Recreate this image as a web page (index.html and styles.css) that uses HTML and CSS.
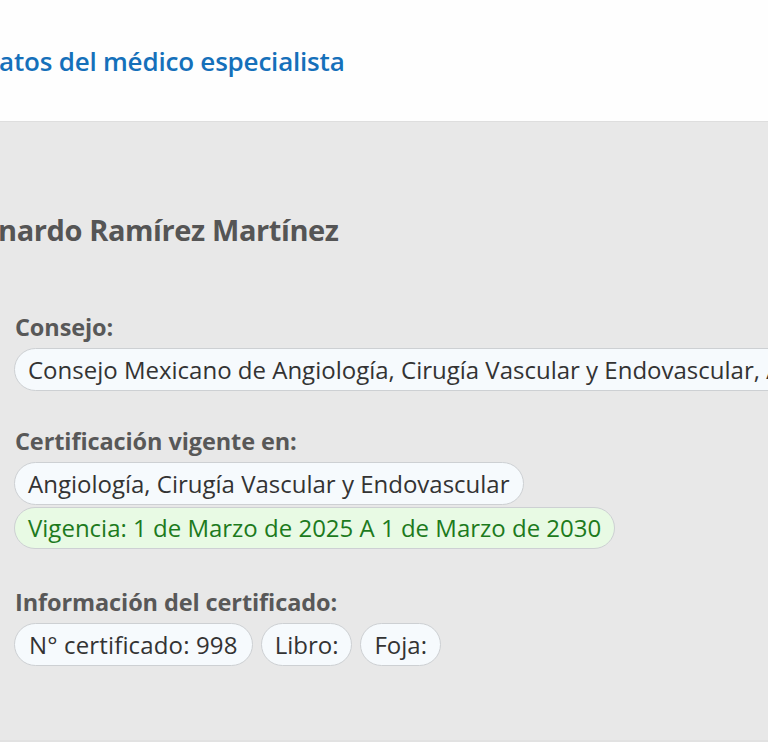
FILE: index.html
```html
<!DOCTYPE html>
<html lang="es">
<head>
<meta charset="utf-8">
<title>Datos del médico especialista</title>
<link rel="stylesheet" href="styles.css">
</head>
<body>
<header class="top">
  <h1 class="title">atos del médico especialista</h1>
</header>
<main class="panel">
  <h2 class="name">nardo Ramírez Martínez</h2>
  <section class="group">
    <h3 class="label">Consejo:</h3>
    <div class="pills">
      <span class="pill pill-wide">Consejo Mexicano de Angiología, Cirugía Vascular y Endovascular, A.C.</span>
    </div>
  </section>
  <section class="group">
    <h3 class="label">Certificación vigente en:</h3>
    <div class="pills pills-col">
      <span class="pill">Angiología, Cirugía Vascular y Endovascular</span>
      <span class="pill pill-green">Vigencia: 1 de Marzo de 2025 A 1 de Marzo de 2030</span>
    </div>
  </section>
  <section class="group">
    <h3 class="label">Información del certificado:</h3>
    <div class="pills">
      <span class="pill pill-num">N° certificado: 998</span>
      <span class="pill">Libro:</span>
      <span class="pill">Foja:</span>
    </div>
  </section>
</main>
<footer class="bottom"></footer>
</body>
</html>
```
FILE: styles.css
```css
html, body {
  margin: 0;
  padding: 0;
  background: #ffffff;
  font-family: "Open Sans", "Noto Sans", sans-serif;
  overflow: hidden;
}
.top {
  height: 121px;
  background: #fefefe;
  border-bottom: 1px solid #dedede;
  display: flex;
  align-items: center;
}
.title {
  margin: 0 0 0 -1px;
  font-size: 26px;
  font-weight: 600;
  color: #1570ba;
  letter-spacing: -0.2px;
  white-space: nowrap;
}
.panel {
  background: #e8e8e8;
  padding: 88px 0 74px 14px;
  border-bottom: 2px solid #e1e1e1;
  overflow: hidden;
}
.name {
  margin: 0 0 0 -16px;
  font-size: 29px;
  font-weight: 700;
  color: #555555;
  letter-spacing: -0.4px;
  white-space: nowrap;
  line-height: 40px;
}
.group {
  margin-top: 62px;
}
.group + .group {
  margin-top: 35px;
}
.group:last-child {
  margin-top: 38px;
}
.label {
  margin: 0 0 6px 1px;
  font-size: 23.5px;
  font-weight: 700;
  color: #585858;
  line-height: 30px;
  letter-spacing: -0.1px;
}
.pills {
  display: flex;
  gap: 8px;
  flex-wrap: nowrap;
}
.pills-col {
  flex-direction: column;
  align-items: flex-start;
  gap: 2px;
}
.pill {
  display: inline-block;
  box-sizing: border-box;
  height: 43px;
  line-height: 41px;
  padding: 0 13px;
  border: 1px solid #cdd0d3;
  border-radius: 22px;
  background: #f6fafd;
  color: #333333;
  font-size: 24px;
  white-space: nowrap;
}
.pill-num {
  padding: 0 14px;
  letter-spacing: 0.15px;
}
.pill-green {
  height: 42px;
  line-height: 40px;
  background: #e8fae4;
  color: #1d7a1d;
}
.bottom {
  height: 10px;
  background: #fefefe;
}
```
